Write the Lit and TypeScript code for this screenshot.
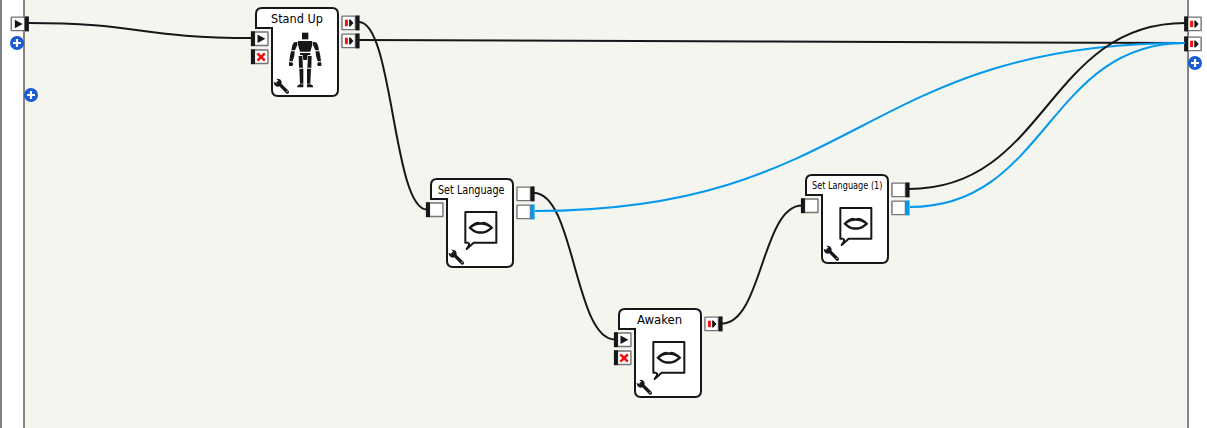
import { LitElement, html, css, svg } from "lit";
import { customElement, property } from "lit/decorators.js";
import { styleMap } from "lit/directives/style-map.js";

type PortKind = "play" | "stop" | "end" | "plain";
interface Port { kind: PortKind; color?: string }
interface BoxData {
  x: number; y: number; title: string; size: number; textX: number; textW: number; textY: number;
  icon: "robot" | "speech"; inputs: Port[]; outputs: Port[];
}

const INK = "#17171a";
const BLUE = "#0399ee";

const glyph = (kind: PortKind) => {
  switch (kind) {
    case "play": return svg`<path d="M4.3 3.3 L12.2 7.6 L4.3 11.9Z" fill="#17171a"/>`;
    case "stop": return svg`<path d="M4.2 4.2 L11.6 11.4 M11.6 4.2 L4.2 11.4" stroke="#f40d0d" stroke-width="2.6"/>`;
    case "end": return svg`<rect x="3.7" y="4.3" width="3" height="6.4" fill="#f41414"/><path d="M7.9 4h1.2L12.3 7.5L9.1 11H7.9Z" fill="#17171a"/>`;
    default: return svg``;
  }
};

// A 15px socket with its connector bar on the left or right side.
const port = (x: number, y: number, p: Port, side: "l" | "r") => svg`
  <g transform="translate(${x} ${y})">
    <rect x="0.75" y="0.75" width="13.5" height="13.5" rx="0.5" fill="#fff" stroke="#737373" stroke-width="1.4"/>
    <g transform="translate(${side === "l" ? -0.5 : 0} 0)">${glyph(p.kind)}</g>
    <rect x=${side === "l" ? -2.8 : 14.4} y="0" width="4" height="15" fill=${p.color ?? INK}/>
  </g>`;

const plus = (x: number, y: number) => svg`
  <circle cx=${x} cy=${y} r="7" fill="#1b5bd3"/>
  <path d="M${x - 4} ${y}h8M${x} ${y - 4}v8" stroke="#fff" stroke-width="2.2"/>`;

const robot = svg`<g transform="translate(24 20) scale(.33333)" fill="#17171a">
  <rect x="66" y="14" width="19" height="20"/>
  <path d="M54 39H97V50L91 71H60L54 50Z"/>
  <path d="M42 43L52 42V51L45 67H34L37 52Z M109 43L99 42V51L106 67H117L114 52Z"/>
  <path d="M33 70H44L43 83L38 100H28L30 84Z M118 70H107L108 83L113 100H123L121 84Z"/>
  <path d="M27 103H36L40 108L37 114H27Z M124 103H115L111 108L114 114H124Z"/>
  <path d="M60 75H91V81H83L81 96H70L68 81H60Z"/>
  <path d="M56 84H67L69 119H57Z M95 84H84L82 119H94Z"/>
  <path d="M58 122H70V167H60Z M93 122H81V167H91Z"/>
  <path d="M59 169H70V178H52V173Z M92 169H81V178H99V173Z"/>
</g>`;

const speech = svg`<g transform="translate(-11 -9) scale(.33333)" fill="none" stroke="#17171a" stroke-width="6">
  <path d="M146 218H136V126H229V218H161L140 237L147 226V218" stroke-linejoin="round"/>
  <path fill="#17171a" stroke="none" fill-rule="evenodd" d="M145 173C155 162 165 156 174 155Q182 158 190 155C199 156 210 162 220 173C210 183 200 191 182 191C164 191 155 183 145 173Z M155 173C163 180 170 184 182 184C194 184 201 180 210 173C202 167 194 164 182 164C170 164 163 167 155 173Z"/>
</g>`;

const wrench = svg`<g transform="translate(-11 -8) scale(.33333)">
  <path d="M99 248L127 276" stroke="#17171a" stroke-width="10" stroke-linecap="round"/>
  <path d="M94 236Q108 235 110 246Q110 258 98 260Q87 259 86 245L95 250L101 244Z" fill="#17171a"/>
  <circle cx="126" cy="274" r="2" fill="#fff"/>
</g>`;

@customElement("flow-box")
class FlowBox extends LitElement {
  static styles = css`
    :host { display: block; }
    .box { display: block; overflow: visible; }
    .title { font-family: "DejaVu Sans Condensed", "DejaVu Sans", sans-serif; font-stretch: condensed; fill: #000; }
  `;
  @property({ attribute: false }) data!: BoxData;
  render() {
    const d = this.data;
    return html`<svg class="box" width="82" height="88">
      <path d="M0 20V6Q0 0 6 0H76Q82 0 82 6V82Q82 88 76 88H22Q16 88 16 82V20Z" fill="#fff" stroke=${INK} stroke-width="2"/>
      <text class="title" x=${d.textX} y=${d.textY} font-size=${d.size} textLength=${d.textW} lengthAdjust="spacingAndGlyphs">${d.title}</text>
      ${d.icon === "robot" ? robot : speech}
      ${wrench}
      ${d.inputs.map((p, i) => port(-2.3, 23.2 + i * 18, p, "l"))}
      ${d.outputs.map((p, i) => port(85.2, 7.4 + i * 18, p, "r"))}
    </svg>`;
  }
}

const boxes: BoxData[] = [
  { x: 256, y: 8, title: "Stand Up", size: 12.6, textX: 15, textW: 52, textY: 15.2, icon: "robot",
    inputs: [{ kind: "play" }, { kind: "stop" }], outputs: [{ kind: "end" }, { kind: "end" }] },
  { x: 431, y: 179, title: "Set Language", size: 11.6, textX: 7, textW: 66.5, textY: 15.2, icon: "speech",
    inputs: [{ kind: "plain" }], outputs: [{ kind: "plain" }, { kind: "plain", color: BLUE }] },
  { x: 619, y: 309, title: "Awaken", size: 12.6, textX: 18, textW: 45.2, textY: 15.2, icon: "speech",
    inputs: [{ kind: "play" }, { kind: "stop" }], outputs: [{ kind: "end" }] },
  { x: 806, y: 175, title: "Set Language (1)", size: 10.2, textX: 6, textW: 70.5, textY: 14.2, icon: "speech",
    inputs: [{ kind: "plain" }], outputs: [{ kind: "plain" }, { kind: "plain", color: BLUE }] },
];

const wires: [number, number, number, number, string][] = [
  [28, 23, 252, 38, INK],
  [359, 22, 427, 209.5, INK],
  [359, 40, 1185, 43, INK],
  [534, 193, 615, 339.5, INK],
  [722, 323.5, 802, 205.5, INK],
  [535, 211, 1185, 43, BLUE],
  [910, 207, 1185, 43, BLUE],
  [909, 189, 1185, 23, INK],
];

@customElement("app-root")
class AppRoot extends LitElement {
  static styles = css`
    :host { display: block; }
    .stage { position: relative; display: flex; height: 428px; overflow: hidden; background: #fff; }
    .rail { box-sizing: border-box; flex: none; background: #fff; }
    .left { width: 23px; border-left: 2px solid #7e7f89; }
    .right { width: 18px; }
    .canvas { flex: 1; background: #f4f5ef; border-left: 2px solid #858585; border-right: 2px solid #858585; }
    .wires { position: absolute; inset: 0; }
    .node { position: absolute; }
  `;
  render() {
    return html`<div class="stage">
      <div class="rail left"></div>
      <div class="canvas"></div>
      <div class="rail right"></div>
      <svg class="wires" width="1207" height="428">
        ${port(10.5, 16.4, { kind: "play" }, "r")}
        ${port(1186.9, 16.4, { kind: "end" }, "l")}
        ${port(1186.9, 36.4, { kind: "end" }, "l")}
        ${wires.map(([a, b, c, d, color]) => svg`<path d="M${a} ${b}C${(a + c) / 2} ${b} ${(a + c) / 2} ${d} ${c} ${d}" fill="none" stroke=${color} stroke-width="2"/>`)}
        ${plus(17, 43)}${plus(31, 95)}${plus(1195, 63)}
      </svg>
      ${boxes.map((b) => html`<flow-box class="node" style=${styleMap({ left: `${b.x}px`, top: `${b.y}px` })} .data=${b}></flow-box>`)}
    </div>`;
  }
}
